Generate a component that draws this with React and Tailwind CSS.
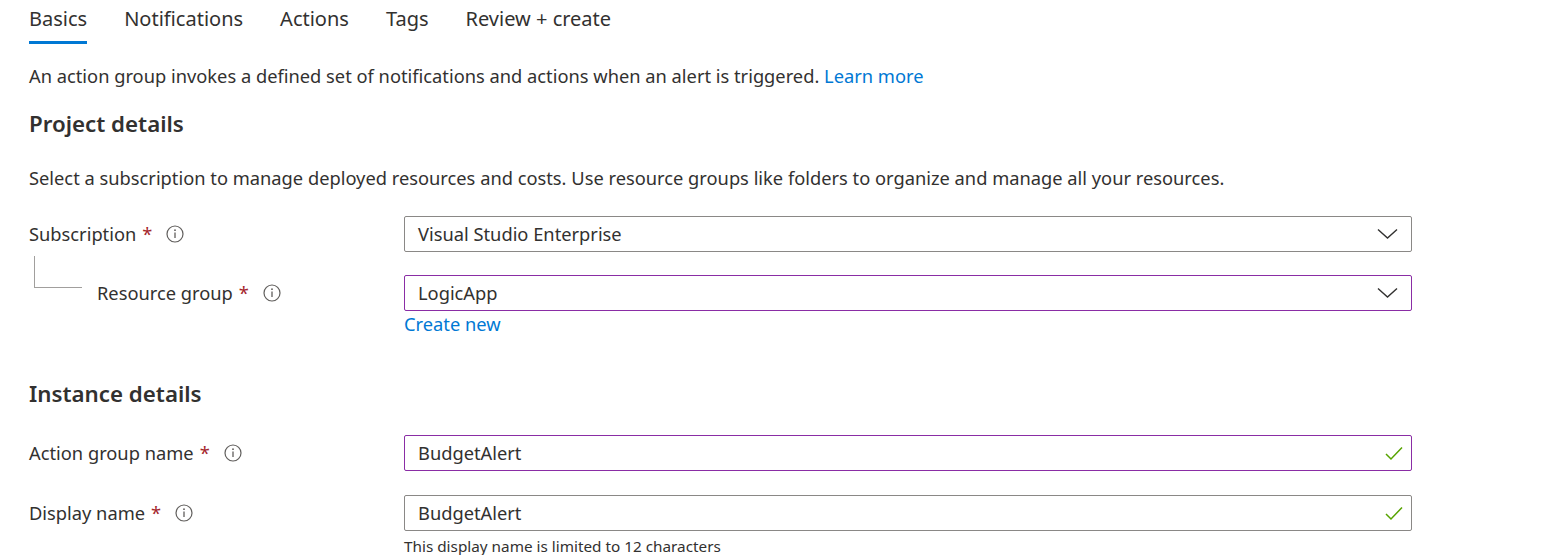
import { useState } from 'react'

const tabs = ['Basics', 'Notifications', 'Actions', 'Tags', 'Review + create']

function InfoIcon() {
  return (
    <svg width="18" height="18" viewBox="0 0 18 18" className="shrink-0">
      <circle cx="9" cy="9" r="8" fill="none" stroke="#605e5c" strokeWidth="1.2" />
      <line x1="9" y1="7.5" x2="9" y2="13" stroke="#605e5c" strokeWidth="1.3" />
      <circle cx="9" cy="5.2" r="0.9" fill="#605e5c" />
    </svg>
  )
}

function Chevron() {
  return (
    <svg width="21" height="12" viewBox="0 0 21 12">
      <path d="M1 1.5 L10.5 10 L20 1.5" fill="none" stroke="#323130" strokeWidth="1.4" />
    </svg>
  )
}

function Check() {
  return (
    <svg width="18" height="15" viewBox="0 0 18 15" className="mr-[-5px]">
      <path d="M1 8 L6 13 L17 1.5" fill="none" stroke="#57a300" strokeWidth="1.5" />
    </svg>
  )
}

function Label({ text }) {
  return (
    <div className="flex items-center">
      <span>{text}</span>
      <span className="text-[#a4262c] ml-[6px]">*</span>
      <span className="ml-[14px]"><InfoIcon /></span>
    </div>
  )
}

function Field({ value, dirty, icon }) {
  return (
    <div
      className={`flex items-center justify-between h-[36px] px-[13px] rounded-[2px] border ${
        dirty ? 'border-[#8a2da5]' : 'border-[#8a8886]'
      }`}
    >
      <span>{value}</span>
      {icon}
    </div>
  )
}

export default function App() {
  const [active] = useState('Basics')

  return (
    <main
      className="w-[1565px] h-[555px] overflow-hidden bg-white text-[#323130] text-[18.3px] px-[29px]"
      style={{ fontFamily: '"Segoe UI", "Noto Sans", sans-serif' }}
    >
      {/* Tabs */}
      <nav className="flex gap-[37px] h-[45px] text-[20px]">
        {tabs.map(t => (
          <div key={t} className="relative pt-[4px]">
            <span>{t}</span>
            {t === active && (
              <div className="absolute left-0 right-0 top-[41px] h-[3px] bg-[#0078d4]" />
            )}
          </div>
        ))}
      </nav>

      <p className="mt-[18px] leading-[26px]">
        An action group invokes a defined set of notifications and actions when an alert is triggered.{' '}
        <span className="text-[#0078d4]">Learn more</span>
      </p>

      <h2 className="mt-[20px] text-[22.3px] font-semibold leading-[30px]">Project details</h2>

      <p className="mt-[26px] leading-[26px]">
        Select a subscription to manage deployed resources and costs. Use resource groups like folders to organize and manage all your resources.
      </p>

      {/* Subscription */}
      <div className="mt-[25px] flex items-center">
        <div className="w-[375px]"><Label text="Subscription" /></div>
        <div className="w-[1008px]"><Field value="Visual Studio Enterprise" icon={<Chevron />} /></div>
      </div>

      {/* Resource group */}
      <div className="mt-[23px] flex items-start">
        <div className="w-[375px] flex items-start">
          <div className="relative w-[68px] h-[36px]">
            <div className="absolute left-[5px] top-[-19px] w-[48px] h-[32px] border-l border-b border-[#a19f9d]" />
          </div>
          <div className="h-[36px] flex items-center"><Label text="Resource group" /></div>
        </div>
        <div className="w-[1008px]">
          <Field value="LogicApp" dirty icon={<Chevron />} />
          <div className="text-[#0078d4] mt-[1px] leading-[24px]">Create new</div>
        </div>
      </div>

      <h2 className="mt-[43px] text-[22.3px] font-semibold leading-[30px]">Instance details</h2>

      {/* Action group name */}
      <div className="mt-[26px] flex items-center">
        <div className="w-[375px]"><Label text="Action group name" /></div>
        <div className="w-[1008px]"><Field value="BudgetAlert" dirty icon={<Check />} /></div>
      </div>

      {/* Display name */}
      <div className="mt-[24px] flex items-start">
        <div className="w-[375px] h-[36px] flex items-center"><Label text="Display name" /></div>
        <div className="w-[1008px]">
          <Field value="BudgetAlert" icon={<Check />} />
          <div className="text-[15.3px] leading-[22px] mt-[4px]">This display name is limited to 12 characters</div>
        </div>
      </div>
    </main>
  )
}
